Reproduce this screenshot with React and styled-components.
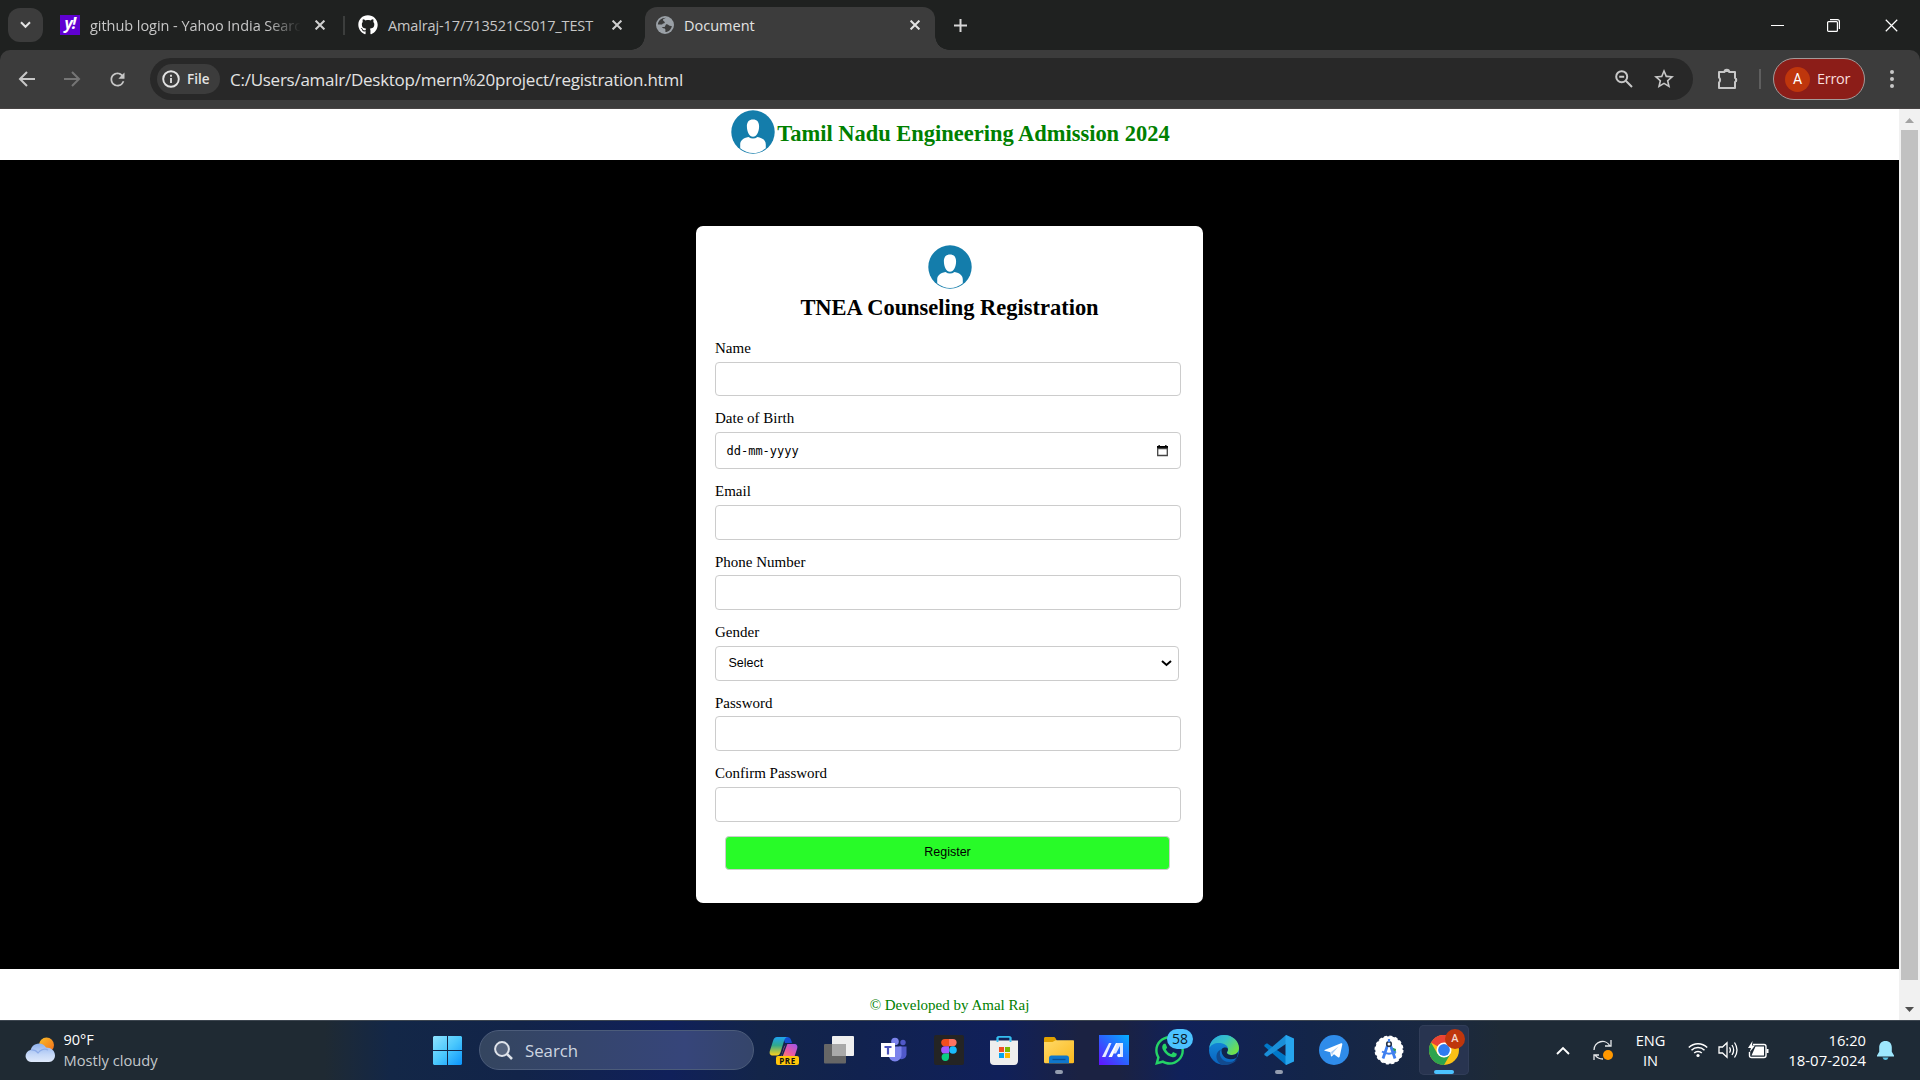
import React from "react";
import styled, { createGlobalStyle } from "styled-components";
import { FaGithub, FaWhatsapp } from "react-icons/fa";
import { MdStarBorder, MdRefresh } from "react-icons/md";

const UI = `"Segoe UI", "Open Sans", "Noto Sans", sans-serif`;
const SERIF = `"Liberation Serif", "Times New Roman", serif`;
const ARIAL = `"Liberation Sans", Arial, sans-serif`;

const Global = createGlobalStyle`
  * { box-sizing: border-box; }
  html, body { margin: 0; padding: 0; overflow: hidden; background: #1f2120; }
  svg { display: block; flex: none; }
`;

const Desktop = styled.div`
  width: 1920px;
  height: 1080px;
  display: flex;
  flex-direction: column;
  overflow: hidden;
  font-family: ${UI};
`;

const Label = styled.span`
  font-family: ${UI};
  font-size: ${(p) => p.$size || 14}px;
  letter-spacing: ${(p) => p.$ls || 0}px;
  font-weight: ${(p) => p.$weight || 400};
  color: ${(p) => p.$color || "#e3e3e3"};
  line-height: ${(p) => p.$lh || 20}px;
  white-space: nowrap;
`;

/* ---------- tab strip ---------- */
const TabStrip = styled.div`
  height: 50px;
  flex: none;
  display: flex;
  background: #1f2120;
  padding-left: 8px;
`;
const TabSearch = styled.div`
  width: 35px;
  height: 34px;
  margin-top: 8px;
  border-radius: 12px;
  background: #3c3c3c;
  display: grid;
  place-items: center;
`;
const Tab = styled.div`
  width: ${(p) => p.$w}px;
  height: 50px;
  padding-left: ${(p) => p.$pl}px;
  display: flex;
  align-items: center;
`;
const TabTitle = styled.div`
  width: ${(p) => p.$w}px;
  margin-left: 10px;
  margin-right: ${(p) => p.$gap}px;
  padding-top: 2px;
  display: flex;
  ${(p) => p.$fade && "mask-image: linear-gradient(90deg, #000 84%, transparent 100%);"}
`;
const Divider = styled.div`
  width: 2px;
  height: ${(p) => p.$h}px;
  background: ${(p) => p.$c};
  margin-left: ${(p) => p.$ml || 0}px;
`;
const TabSep = styled(Divider)`
  align-self: center;
`;
const ActiveTab = styled.div`
  position: relative;
  width: 290px;
  height: 43px;
  margin-top: 7px;
  background: #3c3c3c;
  border-radius: 12px 12px 0 0;
  display: flex;
  align-items: center;
  padding: 0 0 7px 11px;
  &::before, &::after {
    content: "";
    position: absolute;
    bottom: 0;
    width: 14px;
    height: 14px;
  }
  &::before { left: -14px; background: radial-gradient(circle at 0 0, transparent 13.5px, #3c3c3c 14px); }
  &::after { right: -14px; background: radial-gradient(circle at 100% 0, transparent 13.5px, #3c3c3c 14px); }
`;
const NewTab = styled.div`
  width: 50px;
  height: 50px;
  display: grid;
  place-items: center;
`;
const WindowButtons = styled.div`
  margin-left: auto;
  display: flex;
  height: 50px;
  align-items: center;
  gap: 43px;
  padding-right: 22px;
  svg:last-child { margin-left: 2px; }
`;
const YahooIcon = styled.div`
  width: 20px;
  height: 20px;
  background: #5f01d1;
  color: #fff;
  font: italic 700 16px/17px ${UI};
  text-align: center;
  letter-spacing: -1px;
`;

/* ---------- toolbar ---------- */
const ToolbarBack = styled.div`
  flex: none;
  background: #1f2120;
`;
const Toolbar = styled.div`
  height: 59px;
  background: #3c3c3c;
  border-bottom: 1px solid #484444;
  border-radius: 10px 10px 0 0;
  display: flex;
  align-items: center;
  padding-left: 18px;
`;
const NavIcons = styled.div`
  width: 132px;
  display: flex;
  align-items: center;
  gap: 26.5px;
`;
const Omnibox = styled.div`
  width: 1543px;
  height: 42px;
  border-radius: 21px;
  background: #282828;
  display: flex;
  align-items: center;
  padding: 0 17px 0 7px;
`;
const FileChip = styled.div`
  width: 63px;
  height: 30px;
  border-radius: 15px;
  background: #3c3c3c;
  display: flex;
  align-items: center;
  gap: 7px;
  padding-left: 5px;
  margin-right: 10px;
`;
const Address = styled(Label)`
  padding-top: 1px;
`;
const OmniIcons = styled.div`
  margin-left: auto;
  display: flex;
  align-items: center;
  gap: 19px;
`;
const ToolbarRight = styled.div`
  display: flex;
  align-items: center;
  padding-left: 24px;
`;
const ProfilePill = styled.div`
  width: 92px;
  height: 42px;
  border-radius: 21px;
  border: 1px solid #a39a99;
  background: #8c1d18;
  margin-left: 12px;
  margin-right: 19px;
  display: flex;
  align-items: center;
  gap: 7px;
  padding-left: 11px;
`;
const Initial = styled.div`
  width: 25px;
  height: 25px;
  border-radius: 50%;
  background: #bf360c;
  color: #fff;
  font: 400 14px/25px Roboto, sans-serif;
  text-align: center;
`;

/* ---------- page ---------- */
const Viewport = styled.div`
  height: 911px;
  flex: none;
  display: flex;
  background: #fff;
`;
const Page = styled.div`
  width: 1899px;
  height: 911px;
  display: flex;
  flex-direction: column;
  font-family: ${SERIF};
`;
const Header = styled.header`
  height: 51px;
  display: flex;
  justify-content: center;
  padding: 1.3px 0 0 2px;
`;
const Title = styled.h2`
  margin: 0;
  font: 700 22.5px/26px ${SERIF};
  letter-spacing: -0.02px;
  color: ${(p) => p.$color || "#000"};
  white-space: nowrap;
`;
const HeaderTitle = styled(Title)`
  padding-top: 11px;
  margin-left: 2px;
`;
const Main = styled.main`
  height: 809px;
  background: #000;
  display: flex;
  justify-content: center;
  align-items: flex-start;
  padding-top: 66px;
`;
const Card = styled.form`
  width: 507px;
  height: 677px;
  border-radius: 7px;
  background: #fff;
  padding: 19.3px 19px 0;
  display: flex;
  flex-direction: column;
`;
const CardHead = styled.div`
  height: 93.7px;
  display: flex;
  flex-direction: column;
  align-items: center;
  gap: 5.7px;
`;
const Field = styled.div`
  height: ${(p) => p.$h}px;
`;
const FieldLabel = styled.label`
  display: block;
  height: ${(p) => p.$h || 23}px;
  padding-top: 1px;
  font: 400 15px/17px ${SERIF};
  color: #000;
`;
const Control = styled.input`
  display: block;
  width: 466px;
  height: ${(p) => p.$h}px;
  border: 1px solid #ccc;
  border-radius: 4px;
  background: #fff;
  outline: none;
  padding: 0 10px;
`;
const Faux = styled.div`
  width: ${(p) => p.$w}px;
  height: ${(p) => p.$h}px;
  border: 1px solid #ccc;
  border-radius: 4px;
  background: #fff;
  display: flex;
  align-items: center;
  justify-content: space-between;
  padding: ${(p) => p.$pad};
  font: ${(p) => p.$font};
  color: #000;
`;
const Submit = styled.button`
  width: 445px;
  height: 34px;
  margin: 2px 0 0 10px;
  padding: 0;
  border: 1px solid #ccc;
  border-radius: 4px;
  background: #28fb28;
  color: #000;
  font: 400 12.5px/15px ${ARIAL};
`;
const Footer = styled.footer`
  height: 51px;
  padding-top: 28px;
  text-align: center;
  font: 400 15px/17px ${SERIF};
  color: green;
`;
const Scrollbar = styled.div`
  width: 21px;
  height: 911px;
  background: #f1f1f1;
  display: flex;
  flex-direction: column;
  align-items: center;
`;
const ScrollArrow = styled.div`
  height: 21px;
  padding-top: 2px;
  display: grid;
  place-items: center;
`;
const Thumb = styled.div`
  width: 17px;
  height: 850px;
  background: #c1c1c1;
  margin-bottom: 18px;
`;

/* ---------- taskbar ---------- */
const Taskbar = styled.div`
  height: 60px;
  flex: none;
  box-shadow: inset 0 1px 0 #3d4650;
  background: linear-gradient(90deg, #1f2a33 0, #1f2a33 325px, #132747 390px, #122449 520px, #10205a 670px, #132549 760px, #11224f 860px, #10205a 1000px, #1b2242 1080px, #1b2242 1120px, #10215a 1180px, #132549 1310px, #1a2840 1440px, #1e2a36 1500px, #1e2a36 1920px);
  display: flex;
  align-items: center;
`;
const Weather = styled.div`
  width: 433px;
  display: flex;
  align-items: center;
  padding-left: 24.5px;
  gap: 9px;
`;
const Stack = styled.div`
  display: flex;
  flex-direction: column;
  align-items: ${(p) => p.$align || "flex-start"};
  width: ${(p) => (p.$w ? p.$w + "px" : "auto")};
  padding-bottom: ${(p) => p.$lift || 0}px;
`;
const SearchBox = styled.div`
  width: 275px;
  height: 40px;
  border-radius: 20px;
  border: 1px solid #4c5c7a;
  background: linear-gradient(90deg, #34455f, #36457a 75%, #35456a);
  margin: 0 15px 0 17px;
  padding-left: 14px;
  display: flex;
  align-items: center;
  gap: 12px;
`;
const SearchLabel = styled(Label)`
  padding-top: 2px;
`;
const Apps = styled.div`
  display: flex;
  gap: 5px;
  margin-left: -10px;
`;
const AppButton = styled.div`
  position: relative;
  width: 50px;
  height: 50px;
  border-radius: 5px;
  display: grid;
  place-items: center;
  ${(p) => p.$active && "background: #283450; box-shadow: inset 0 0 0 1px #313d58;"}
`;
const Running = styled.div`
  position: absolute;
  bottom: 1px;
  left: ${(p) => (p.$active ? 15 : 21)}px;
  width: ${(p) => (p.$active ? 20 : 8)}px;
  height: 4px;
  border-radius: 2px;
  background: ${(p) => (p.$active ? "#4cc2ff" : "#949daf")};
`;
const Badge = styled.div`
  position: absolute;
  top: ${(p) => p.$top}px;
  left: ${(p) => p.$left}px;
  width: ${(p) => p.$w}px;
  height: 20px;
  border-radius: 10px;
  background: ${(p) => p.$bg};
  color: ${(p) => p.$fg};
  font: ${(p) => p.$font};
  text-align: center;
`;
const PreTag = styled.div`
  position: absolute;
  left: 17px;
  top: 31px;
  width: 23px;
  height: 9px;
  border-radius: 2px;
  background: #ffc60a;
  color: #111;
  font: 700 8px/9px ${UI};
  letter-spacing: 0.5px;
  text-align: center;
`;
const Tray = styled.div`
  margin-left: auto;
  display: flex;
  align-items: center;
  padding-right: 26px;
`;
const Status = styled.div`
  display: flex;
  align-items: center;
  gap: 9.5px;
`;
const Slot = styled.div`
  margin-left: ${(p) => p.$ml}px;
`;

/* ---------- drawings ---------- */
const Cross = ({ s = 10, w = 2, c = "#d0d0d0" }) => (
  <svg width={s} height={s} viewBox="0 0 10 10" stroke={c} strokeWidth={w * (10 / s)} fill="none">
    <path d="M.6.6 9.4 9.4M9.4.6.6 9.4" />
  </svg>
);
const Arrow = ({ c, flip }) => (
  <svg width="18" height="18" viewBox="0 0 18 18" fill="none" stroke={c} strokeWidth="2" transform={flip ? "scale(-1,1)" : undefined}>
    <path d="M17 9H2.500M9 2 2 9l7 7" />
  </svg>
);
const Globe = () => (
  <svg width="18" height="18" viewBox="0 0 18 18">
    <circle cx="9" cy="9" r="9" fill="#9aa0a6" />
    <path d="M10 1.800c-1.200 1-3 .6-3 2.200 0 1.400 1.800 1.200 1.800 2.400 0 1.300-2.600.6-2.600 2.200H1.900C2 5 5.200 1.800 10 1.800zM10.500 8.200c2.500 0 2.200 2.200 5.300 1.800-.4 3.200-3 5.800-6.400 6.100v-2.400c0-1.600-2.400-1-3.600-2.700h2.400c1.300 0 1-2.800 2.300-2.800z" fill="#3c3c3c" />
  </svg>
);
const Avatar = () => (
  <svg width="44" height="44" viewBox="0 0 44 44">
    <circle cx="22" cy="22" r="21.700" fill="#147dab" />
    <path d="M22 9.500c4 0 6.300 2.600 6.100 7.200-.2 5.300-2.500 10-6.100 10s-5.900-4.700-6.100-10C15.700 12.100 18 9.500 22 9.500z" fill="#fff" />
    <path d="M17.500 27q4.500 3 9 0c5.500 1.200 8.300 3.500 8.300 7.500v3.800Q29 43 22 43T9.200 38.300v-3.800c0-4 2.800-6.300 8.300-7.500z" fill="#fff" />
  </svg>
);
const Cloud = () => (
  <svg width="30" height="26" viewBox="0 0 30 26">
    <defs>
      <linearGradient id="sun" x1="0" y1="0" x2="1" y2="1"><stop offset="0" stopColor="#f9bf28" /><stop offset="1" stopColor="#f26b1b" /></linearGradient>
      <linearGradient id="cl" x1="0" y1="0" x2="0" y2="1"><stop offset="0" stopColor="#8fb2ee" /><stop offset=".6" stopColor="#c5d8f8" /><stop offset="1" stopColor="#dfe9fb" /></linearGradient>
    </defs>
    <circle cx="21.500" cy="8" r="7.500" fill="url(#sun)" />
    <path d="M6 25a6 6 0 0 1-.4-11.900A8.500 8.500 0 0 1 21 10.500c5 0 9 3 9 8 0 3.500-2.500 6.500-6 6.500z" fill="url(#cl)" />
    <path d="M6 13c3-.3 5.500 1 7 3 2-3 6-5 10-3" stroke="#8cabe8" strokeWidth="1.200" fill="none" />
  </svg>
);
const Windows = () => (
  <svg width="29" height="29" viewBox="0 0 29 29">
    <defs><linearGradient id="win" x1="0" y1="0" x2="29" y2="29" gradientUnits="userSpaceOnUse"><stop offset="0" stopColor="#8fe3ff" /><stop offset=".5" stopColor="#4bc8fd" /><stop offset="1" stopColor="#0a94fc" /></linearGradient></defs>
    <path d="M1 0h13v14H0V1zM15 0h13l1 1v13H15zM0 15h14v14H1l-1-1zM15 15h14v13l-1 1H15z" fill="url(#win)" />
  </svg>
);
const Copilot = () => (
  <svg width="30" height="30" viewBox="0 0 30 30">
    <defs>
      <linearGradient id="cp1" x1="0" y1="0" x2="0" y2="1"><stop offset="0" stopColor="#1fa2f0" /><stop offset=".45" stopColor="#30a98c" /><stop offset="1" stopColor="#ffd21c" /></linearGradient>
      <linearGradient id="cp2" x1="1" y1="0" x2="0" y2="1"><stop offset="0" stopColor="#9a55ef" /><stop offset=".5" stopColor="#ec5a9e" /><stop offset="1" stopColor="#ff9a49" /></linearGradient>
    </defs>
    <path d="M14 2h4c3 0 4 2 5 6h-7z" fill="#124ed0" />
    <path d="M8 2h11c-2 0-3 1-4 4l-3 10c-1 3-2 4.500-4 4.500H4c-3 0-4-2-3-5L4 6c1-3 2-4 4-4z" fill="url(#cp1)" />
    <path d="M19 9h6c3 0 4 2 3 5l-3 9H8c3 0 4-1 5-4l2-7c1-2 2-3 4-3z" fill="url(#cp2)" />
    <path d="m17.500 9-4.500 12" stroke="#132550" strokeWidth="1.600" />
  </svg>
);
const TaskView = () => (
  <svg width="30" height="30" viewBox="0 0 30 30">
    <rect x="8" y="1" width="22" height="20" rx="1" fill="#efefef" />
    <rect x="0" y="9" width="22" height="19.500" rx="1" fill="#666" />
    <rect x="8" y="9" width="14" height="12" fill="#a9a9a9" />
  </svg>
);
const Teams = () => (
  <svg width="30" height="30" viewBox="0 0 30 30">
    <circle cx="16" cy="6.500" r="3.800" fill="#7b83eb" />
    <circle cx="24" cy="7.500" r="2.700" fill="#5059c9" />
    <path d="M20 11.500h7.500v8a5 5 0 0 1-7.500 4z" fill="#5059c9" />
    <path d="M9 11.500h13.500V20a6.300 6.300 0 0 1-13 0z" fill="#7b83eb" />
    <rect x="2" y="8" width="14" height="14" fill="#fff" />
    <path d="M5.500 11h7v2h-2.400v6.500H7.900V13H5.500z" fill="#4b53bc" />
  </svg>
);
const Figma = () => (
  <svg width="30" height="30" viewBox="0 0 30 30">
    <rect width="30" height="30" rx="2" fill="#242424" />
    <path d="M15 4h-4.200a3.600 3.600 0 0 0 0 7.200H15z" fill="#f24e1e" />
    <path d="M15 4h4a3.600 3.600 0 0 1 0 7.200h-4z" fill="#ff7262" />
    <path d="M15 11.200h-4.200a3.700 3.700 0 0 0 0 7.400H15z" fill="#a259ff" />
    <circle cx="19" cy="15" r="3.800" fill="#1abcfe" />
    <path d="M15 18.600h-4.200a3.700 3.700 0 1 0 4.200 3.700z" fill="#0acf83" />
  </svg>
);
const Store = () => (
  <svg width="30" height="30" viewBox="0 0 30 30">
    <path d="M8.500 7V3c0-.8.500-1.200 1.200-1.200h10.600c.7 0 1.200.4 1.200 1.200v4" fill="none" stroke="#35bdf0" strokeWidth="1.800" />
    <path d="M1 5.500h28V26a4 4 0 0 1-4 4H5a4 4 0 0 1-4-4z" fill="#eee" />
    <path d="M8.500 2v5M21.500 2v5" stroke="#35bdf0" strokeWidth="1.800" />
    <path d="M10 12h5v5h-5z" fill="#f04e23" /><path d="M16 12h5v5h-5z" fill="#7db900" /><path d="M10 18h5v5h-5z" fill="#04a4ef" /><path d="M16 18h5v5h-5z" fill="#ffb901" />
  </svg>
);
const Folder = () => (
  <svg width="30" height="30" viewBox="0 0 30 30">
    <defs><linearGradient id="fo" x1="0" y1="0" x2="1" y2="1"><stop offset="0" stopColor="#ffd968" /><stop offset="1" stopColor="#fbb91e" /></linearGradient></defs>
    <path d="M0 3.500C0 2.500.6 2 1.500 2h8c1 0 1.500.5 2 1.200l1.300 2.300V9H0z" fill="#e0a000" />
    <path d="M0 7h8.500l3-1.800H29c.6 0 1 .4 1 1V27c0 .8-.5 1.200-1.200 1.200H1.200C.5 28.200 0 27.800 0 27z" fill="url(#fo)" />
    <path d="M5 28.300V23c0-1.600.9-2.500 2.400-2.500h15.200c1.500 0 2.400.9 2.400 2.500v5.300z" fill="#1077cc" />
    <path d="M8.500 24.500h13" stroke="#0a4f96" strokeWidth="1.300" />
  </svg>
);
const MyAsus = () => (
  <svg width="30" height="30" viewBox="0 0 30 30">
    <defs><linearGradient id="as" x1="0" y1="1" x2="1" y2="0"><stop offset="0" stopColor="#6410ff" /><stop offset=".5" stopColor="#2b62ff" /><stop offset="1" stopColor="#04b0ff" /></linearGradient></defs>
    <rect width="30" height="30" fill="url(#as)" />
    <path d="M3 22 10 8h2.500L6.500 22z" fill="#e6eaff" /><path d="M9.500 22 17 8h2.500L13 22z" fill="#fff" />
    <path d="M18 8h6v14h-3V11l-4 7.500h-2.500z" fill="#dfe8ff" /><circle cx="20" cy="20.500" r="1.800" fill="#fff" />
  </svg>
);
const Edge = () => (
  <svg width="30" height="30" viewBox="0 0 30 30">
    <defs>
      <linearGradient id="e1" x1="0" y1="0" x2="1" y2=".6"><stop offset="0" stopColor="#2aa8dc" /><stop offset=".5" stopColor="#35c1c9" /><stop offset="1" stopColor="#6fe04b" /></linearGradient>
      <linearGradient id="e2" x1="0" y1="0" x2="0" y2="1"><stop offset="0" stopColor="#1490df" /><stop offset="1" stopColor="#0a62bd" /></linearGradient>
    </defs>
    <circle cx="15" cy="15" r="15" fill="url(#e2)" />
    <path d="M.3 13C1 5.500 7.500 0 15 0c9 0 15 6.500 15 13 0 4-3 7-7 7-3.500 0-5-1.500-5-2.500s1-1.500 1-3.500c0-3.500-4-6-9-6S2 10 .3 13z" fill="url(#e1)" />
    <path d="M12 14.500C9 19 12 27 20.500 27c3 0 5.500-1 7.800-2.800C25.600 28 20.500 30 15 30c-5-.5-8-5-7.500-9.500.3-3 2-5 4.500-6z" fill="#124a8e" />
    <path d="M18 17.500c-.8.700 1 2.500 5 2.500 2.500 0 4.500-1 6-3a15 15 0 0 1-1.500 6C19 26.500 12 22 12.500 14.500 14 12 18 12 19 14c0 2-1 2.500-1 3.500z" fill="#11244c" />
  </svg>
);
const VSCode = () => (
  <svg width="30" height="30" viewBox="0 0 30 30">
    <path d="M22.500 21.500 3 8.300.6 9.800q-.6 1 0 1.700L22 30h.5z" fill="#0078c8" />
    <path d="M22.500 8.500 3 21.700.6 20.200q-.6-1 0-1.700L22 0h.5z" fill="#1a8fd8" />
    <path d="M22.200 0 30 3.500v23L22.200 30l-.7-1V1z" fill="#26a5ee" />
  </svg>
);
const Telegram = () => (
  <svg width="30" height="30" viewBox="0 0 30 30">
    <circle cx="15" cy="15" r="15" fill="#2f8cea" />
    <path d="M5.500 15 22 8.300c.8-.3 1.500.2 1.300 1.200l-2.600 12c-.2 1-.9 1.200-1.700.7l-4-3-2 2c-.5.500-1 .4-1.100-.4l-.6-3.600-5.500-1.500c-.7-.2-.8-.500-.3-.7z" fill="#fff" />
    <path d="m12 17 7.500-5.500-5.700 6.800-.8 2.500z" fill="#a8cdf5" />
  </svg>
);
const AndroidStudio = () => (
  <svg width="30" height="30" viewBox="0 0 30 30">
    <circle cx="15" cy="15" r="13.700" fill="#fff" stroke="#fff" strokeWidth="1.600" strokeDasharray="3 2.380" />
    <path d="M18 12.500 22 14l-.5 5-3.500-2z" fill="#2a9d57" />
    <path d="m14 9-5 14.500M16 9l5 14.500" stroke="#3f7ff0" strokeWidth="2.800" />
    <path d="M8 16.500q7 4.500 14 0" stroke="#3f7ff0" strokeWidth="2" fill="none" />
    <circle cx="15" cy="9" r="2.300" fill="#fff" stroke="#253248" strokeWidth="1.600" />
    <path d="M15 4v3" stroke="#4285f4" strokeWidth="2.200" />
  </svg>
);
const Chrome = () => (
  <svg width="30" height="30" viewBox="0 0 30 30">
    <circle cx="15" cy="15" r="15" fill="#fbc116" />
    <path d="M15 15 2 7.500A15 15 0 0 1 28 7.500H15z" fill="#ea4335" />
    <path d="M2 7.500A15 15 0 0 0 15 30l6.500-11.250L15 22.500 8.500 18.750z" fill="#2da44e" />
    <circle cx="15" cy="15" r="7.500" fill="#fff" /><circle cx="15" cy="15" r="5.900" fill="#2f7bf0" />
  </svg>
);
const WhatsApp = () => <FaWhatsapp size={33} color="#25d366" />;

const APPS = [
  { id: "copilot", Icon: Copilot, pre: true },
  { id: "taskview", Icon: TaskView },
  { id: "teams", Icon: Teams },
  { id: "figma", Icon: Figma },
  { id: "store", Icon: Store },
  { id: "folder", Icon: Folder, running: true },
  { id: "asus", Icon: MyAsus },
  { id: "whatsapp", Icon: WhatsApp, count: "58" },
  { id: "edge", Icon: Edge },
  { id: "vscode", Icon: VSCode, running: true },
  { id: "telegram", Icon: Telegram },
  { id: "studio", Icon: AndroidStudio },
  { id: "chrome", Icon: Chrome, running: true, active: true, initial: "A" },
];

const FIELDS = [
  { label: "Name", type: "text", row: 70, lh: 23, h: 34 },
  { label: "Date of Birth", type: "date", row: 73, lh: 23, h: 37 },
  { label: "Email", type: "email", row: 71, lh: 23, h: 35 },
  { label: "Phone Number", type: "tel", row: 70, lh: 22, h: 35 },
  { label: "Gender", type: "select", row: 71, lh: 23, h: 35 },
  { label: "Password", type: "password", row: 70, lh: 22, h: 35 },
  { label: "Confirm Password", type: "password", row: 70, lh: 23, h: 35 },
];

function FieldControl({ type, h }) {
  if (type === "date")
    return (
      <Faux $w={466} $h={h} $pad="1px 12px 0 10.5px" $font={'12px/16px "DejaVu Sans Mono", monospace'}>
        dd-mm-yyyy
        <svg width="11" height="12" viewBox="0 0 11 12">
          <path d="M0 1h1.500V0h1.300v1h5.400V0h1.300v1H11v3H0z" fill="#000" />
          <path d="M.7 3.500h9.600v7H.7z" fill="none" stroke="#444" strokeWidth="1.300" />
        </svg>
      </Faux>
    );
  if (type === "select")
    return (
      <Faux $w={464} $h={h} $pad="0 6px 0 12.5px" $font={`12.5px/15px ${ARIAL}`}>
        Select
        <svg width="11" height="7" viewBox="0 0 11 7"><path d="M1 1l4.500 4L10 1" fill="none" stroke="#000" strokeWidth="2" /></svg>
      </Faux>
    );
  return <Control type={type} $h={h} />;
}

export default function App() {
  return (
    <Desktop>
      <Global />
      <TabStrip>
        <TabSearch>
          <svg width="11" height="8" viewBox="0 0 11 8"><path d="M1 1.200l4.500 4.600L10 1.200" fill="none" stroke="#e3e3e3" strokeWidth="2" /></svg>
        </TabSearch>
        <Tab $w={300} $pl={17}>
          <YahooIcon>y!</YahooIcon>
          <TabTitle $w={211} $gap={14} $fade><Label $size={14.5} $ls={-0.05} $color="#c7c7c7">github login - Yahoo India Searc</Label></TabTitle>
          <Cross />
        </Tab>
        <TabSep $h={19} $c="#3c3e3d" />
        <Tab $w={300} $pl={13}>
          <FaGithub size={20} color="#fff" />
          <TabTitle $w={208} $gap={16}><Label $size={14.5} $ls={-0.13} $color="#c7c7c7">Amalraj-17/713521CS017_TEST</Label></TabTitle>
          <Cross />
        </Tab>
        <ActiveTab>
          <Globe />
          <TabTitle $w={200} $gap={26}><Label $size={14.5}>Document</Label></TabTitle>
          <Cross c="#e3e3e3" />
        </ActiveTab>
        <NewTab>
          <svg width="13" height="13" viewBox="0 0 13 13"><path d="M6.500 0v13M0 6.500h13" stroke="#d6d6d6" strokeWidth="2" /></svg>
        </NewTab>
        <WindowButtons>
          <svg width="13" height="13" viewBox="0 0 13 13"><path d="M0 6.500h13" stroke="#fff" strokeWidth="1" /></svg>
          <svg width="13" height="13" viewBox="0 0 13 13" fill="none" stroke="#fff" strokeWidth="1.200"><rect x=".6" y="2.600" width="9.800" height="9.800" rx="1" /><path d="M3 .6h7.400q2 0 2 2V10" /></svg>
          <Cross s={13} w={1.2} c="#fff" />
        </WindowButtons>
      </TabStrip>

      <ToolbarBack>
        <Toolbar>
          <NavIcons>
            <Arrow c="#c7c7c7" />
            <Arrow c="#757575" flip />
            <MdRefresh size={21} color="#c7c7c7" />
          </NavIcons>
          <Omnibox>
            <FileChip>
              <svg width="18" height="18" viewBox="0 0 18 18"><circle cx="9" cy="9" r="7.800" fill="none" stroke="#e3e3e3" strokeWidth="1.900" /><path d="M9 8v5M9 4.800v1.900" stroke="#e3e3e3" strokeWidth="1.800" /></svg>
              <Label $size={13.5} $weight={600}>File</Label>
            </FileChip>
            <Address $size={17} $ls={-0.26} $lh={24}>C:/Users/amalr/Desktop/mern%20project/registration.html</Address>
            <OmniIcons>
              <svg width="18" height="18" viewBox="0 0 18 18" fill="none" stroke="#c7c7c7" strokeWidth="2"><circle cx="6.700" cy="6.700" r="5.500" /><path d="M4.200 6.700h5M10.800 10.800l6.200 6.200" /></svg>
              <MdStarBorder size={24} color="#c7c7c7" />
            </OmniIcons>
          </Omnibox>
          <ToolbarRight>
            <svg width="22" height="22" viewBox="0 0 22 22"><path d="M2 4h5.500a2.300 2.300 0 0 1 4.600 0H18v6a2.300 2.300 0 0 1 0 4v6H2v-5.500a3.300 3.300 0 0 0 0-5z" fill="none" stroke="#c7c7c7" strokeWidth="2" strokeLinejoin="round" /><path d="M7.500 4a2.300 2.300 0 0 1 4.600 0zM18 9.700a2.300 2.300 0 0 1 0 4.600z" fill="#c7c7c7" /></svg>
            <Divider $h={20} $c="#5e5e5e" $ml={20} />
            <ProfilePill><Initial>A</Initial><Label $size={14.5} $ls={-0.3} $color="#f9dedc">Error</Label></ProfilePill>
            <svg width="16" height="20" viewBox="0 0 16 20" fill="#c7c7c7"><circle cx="8" cy="3" r="2" /><circle cx="8" cy="10" r="2" /><circle cx="8" cy="17" r="2" /></svg>
          </ToolbarRight>
        </Toolbar>
      </ToolbarBack>

      <Viewport>
        <Page>
          <Header>
            <Avatar />
            <HeaderTitle $color="green">Tamil Nadu Engineering Admission 2024</HeaderTitle>
          </Header>
          <Main>
            <Card onSubmit={(e) => e.preventDefault()}>
              <CardHead>
                <Avatar />
                <Title>TNEA Counseling Registration</Title>
              </CardHead>
              {FIELDS.map((f) => (
                <Field key={f.label} $h={f.row}>
                  <FieldLabel $h={f.lh}>{f.label}</FieldLabel>
                  <FieldControl type={f.type} h={f.h} />
                </Field>
              ))}
              <Submit type="submit">Register</Submit>
            </Card>
          </Main>
          <Footer>© Developed by Amal Raj</Footer>
        </Page>
        <Scrollbar>
          <ScrollArrow><svg width="9" height="5" viewBox="0 0 9 5"><path d="M4.500 0 9 5H0z" fill="#a3a3a3" /></svg></ScrollArrow>
          <Thumb />
          <ScrollArrow><svg width="9" height="5" viewBox="0 0 9 5"><path d="M0 0h9L4.500 5z" fill="#505050" /></svg></ScrollArrow>
        </Scrollbar>
      </Viewport>

      <Taskbar>
        <Weather>
          <Cloud />
          <Stack $lift={1}>
            <Label $size={14.5} $color="#fff">90°F</Label>
            <Label $size={14.7} $color="#c3c8cc">Mostly cloudy</Label>
          </Stack>
        </Weather>
        <Windows />
        <SearchBox>
          <svg width="19" height="19" viewBox="0 0 19 19" fill="none" stroke="#dfe3ea"><circle cx="8" cy="8" r="6.900" strokeWidth="2" fill="#56647d" /><path d="m13 13 5 5" strokeWidth="2.600" /></svg>
          <SearchLabel $size={16.8} $color="#ced5e0">Search</SearchLabel>
        </SearchBox>
        <Apps>
          {APPS.map(({ id, Icon, pre, running, active, count, initial }) => (
            <AppButton key={id} $active={active}>
              <Icon />
              {pre && <PreTag>PRE</PreTag>}
              {count && <Badge $top={4} $left={23} $w={26} $bg="#4cc2ff" $fg="#0a1a2a" $font={`400 14px/20px ${UI}`}>{count}</Badge>}
              {initial && <Badge $top={4} $left={26} $w={20} $bg="#bf360c" $fg="#f3d9d0" $font="500 11px/20px Roboto, sans-serif">{initial}</Badge>}
              {running && <Running $active={active} />}
            </AppButton>
          ))}
        </Apps>
        <Tray>
          <svg width="14" height="9" viewBox="0 0 14 9"><path d="m1 8 6-6 6 6" fill="none" stroke="#fff" strokeWidth="1.900" /></svg>
          <Slot $ml={23}>
            <svg width="20" height="20" viewBox="0 0 20 20">
              <path d="M1 10a8.500 8.500 0 0 1 16-4M18 0v6h-6M1 20v-5h5M2 15c2 3 5 4 8 4" fill="none" stroke="#e8eaec" strokeWidth="1.300" />
              <circle cx="15" cy="15" r="5" fill="#ff9800" />
            </svg>
          </Slot>
          <Stack $align="center" $w={75}>
            <Label $size={14.6} $color="#fff">ENG</Label>
            <Label $size={14.6} $color="#fff">IN</Label>
          </Stack>
          <Status>
            <svg width="20" height="16" viewBox="0 0 20 16" fill="none" stroke="#fff" strokeWidth="1.500"><path d="M.8 5.500a13 13 0 0 1 18.400 0M3.500 8.300a9.200 9.200 0 0 1 13 0M6.200 11a5.400 5.400 0 0 1 7.600 0" /><circle cx="10" cy="13.500" r="1.600" fill="#fff" stroke="none" /></svg>
            <svg width="21" height="18" viewBox="0 0 21 18" fill="none" stroke="#fff" strokeWidth="1.300"><path d="M1 6h3.500L9 1.800v14.400L4.500 12H1z" /><path d="M11.500 6.300q1.800 2.700 0 5.400M14 4q3.300 5 0 10M16.500 1.500q5 7.500 0 15" /></svg>
            <svg width="21" height="18" viewBox="0 0 21 18"><path d="M5 3.500h11q2 0 2 2v9q0 2-2 2H3.500q-2 0-2-2V11" fill="none" stroke="#fff" strokeWidth="1.400" /><path d="M7.500 5.500h8.500v9H3.500z M18.500 8h2v4h-2z" fill="#fff" /><path d="M4.500 0 0 7h3L1.500 11.500 7 4.500H4z" fill="#fff" /></svg>
          </Status>
          <Stack $align="flex-end" $w={97} $lift={1}>
            <Label $size={14.7} $color="#fff">16:20</Label>
            <Label $size={14.9} $color="#fff">18-07-2024</Label>
          </Stack>
          <Slot $ml={11}>
            <svg width="17" height="19" viewBox="0 0 17 19"><path d="M8.500 0c4 0 6.300 2.700 6.300 6.500v4.300L17 14.500v1H0v-1l2.200-3.700V6.500C2.200 2.700 4.500 0 8.500 0z" fill="#9ee7fd" /><path d="M5.500 16.500h6q-1 2.500-3 2.500t-3-2.500z" fill="#5cc4e6" /></svg>
          </Slot>
        </Tray>
      </Taskbar>
    </Desktop>
  );
}
